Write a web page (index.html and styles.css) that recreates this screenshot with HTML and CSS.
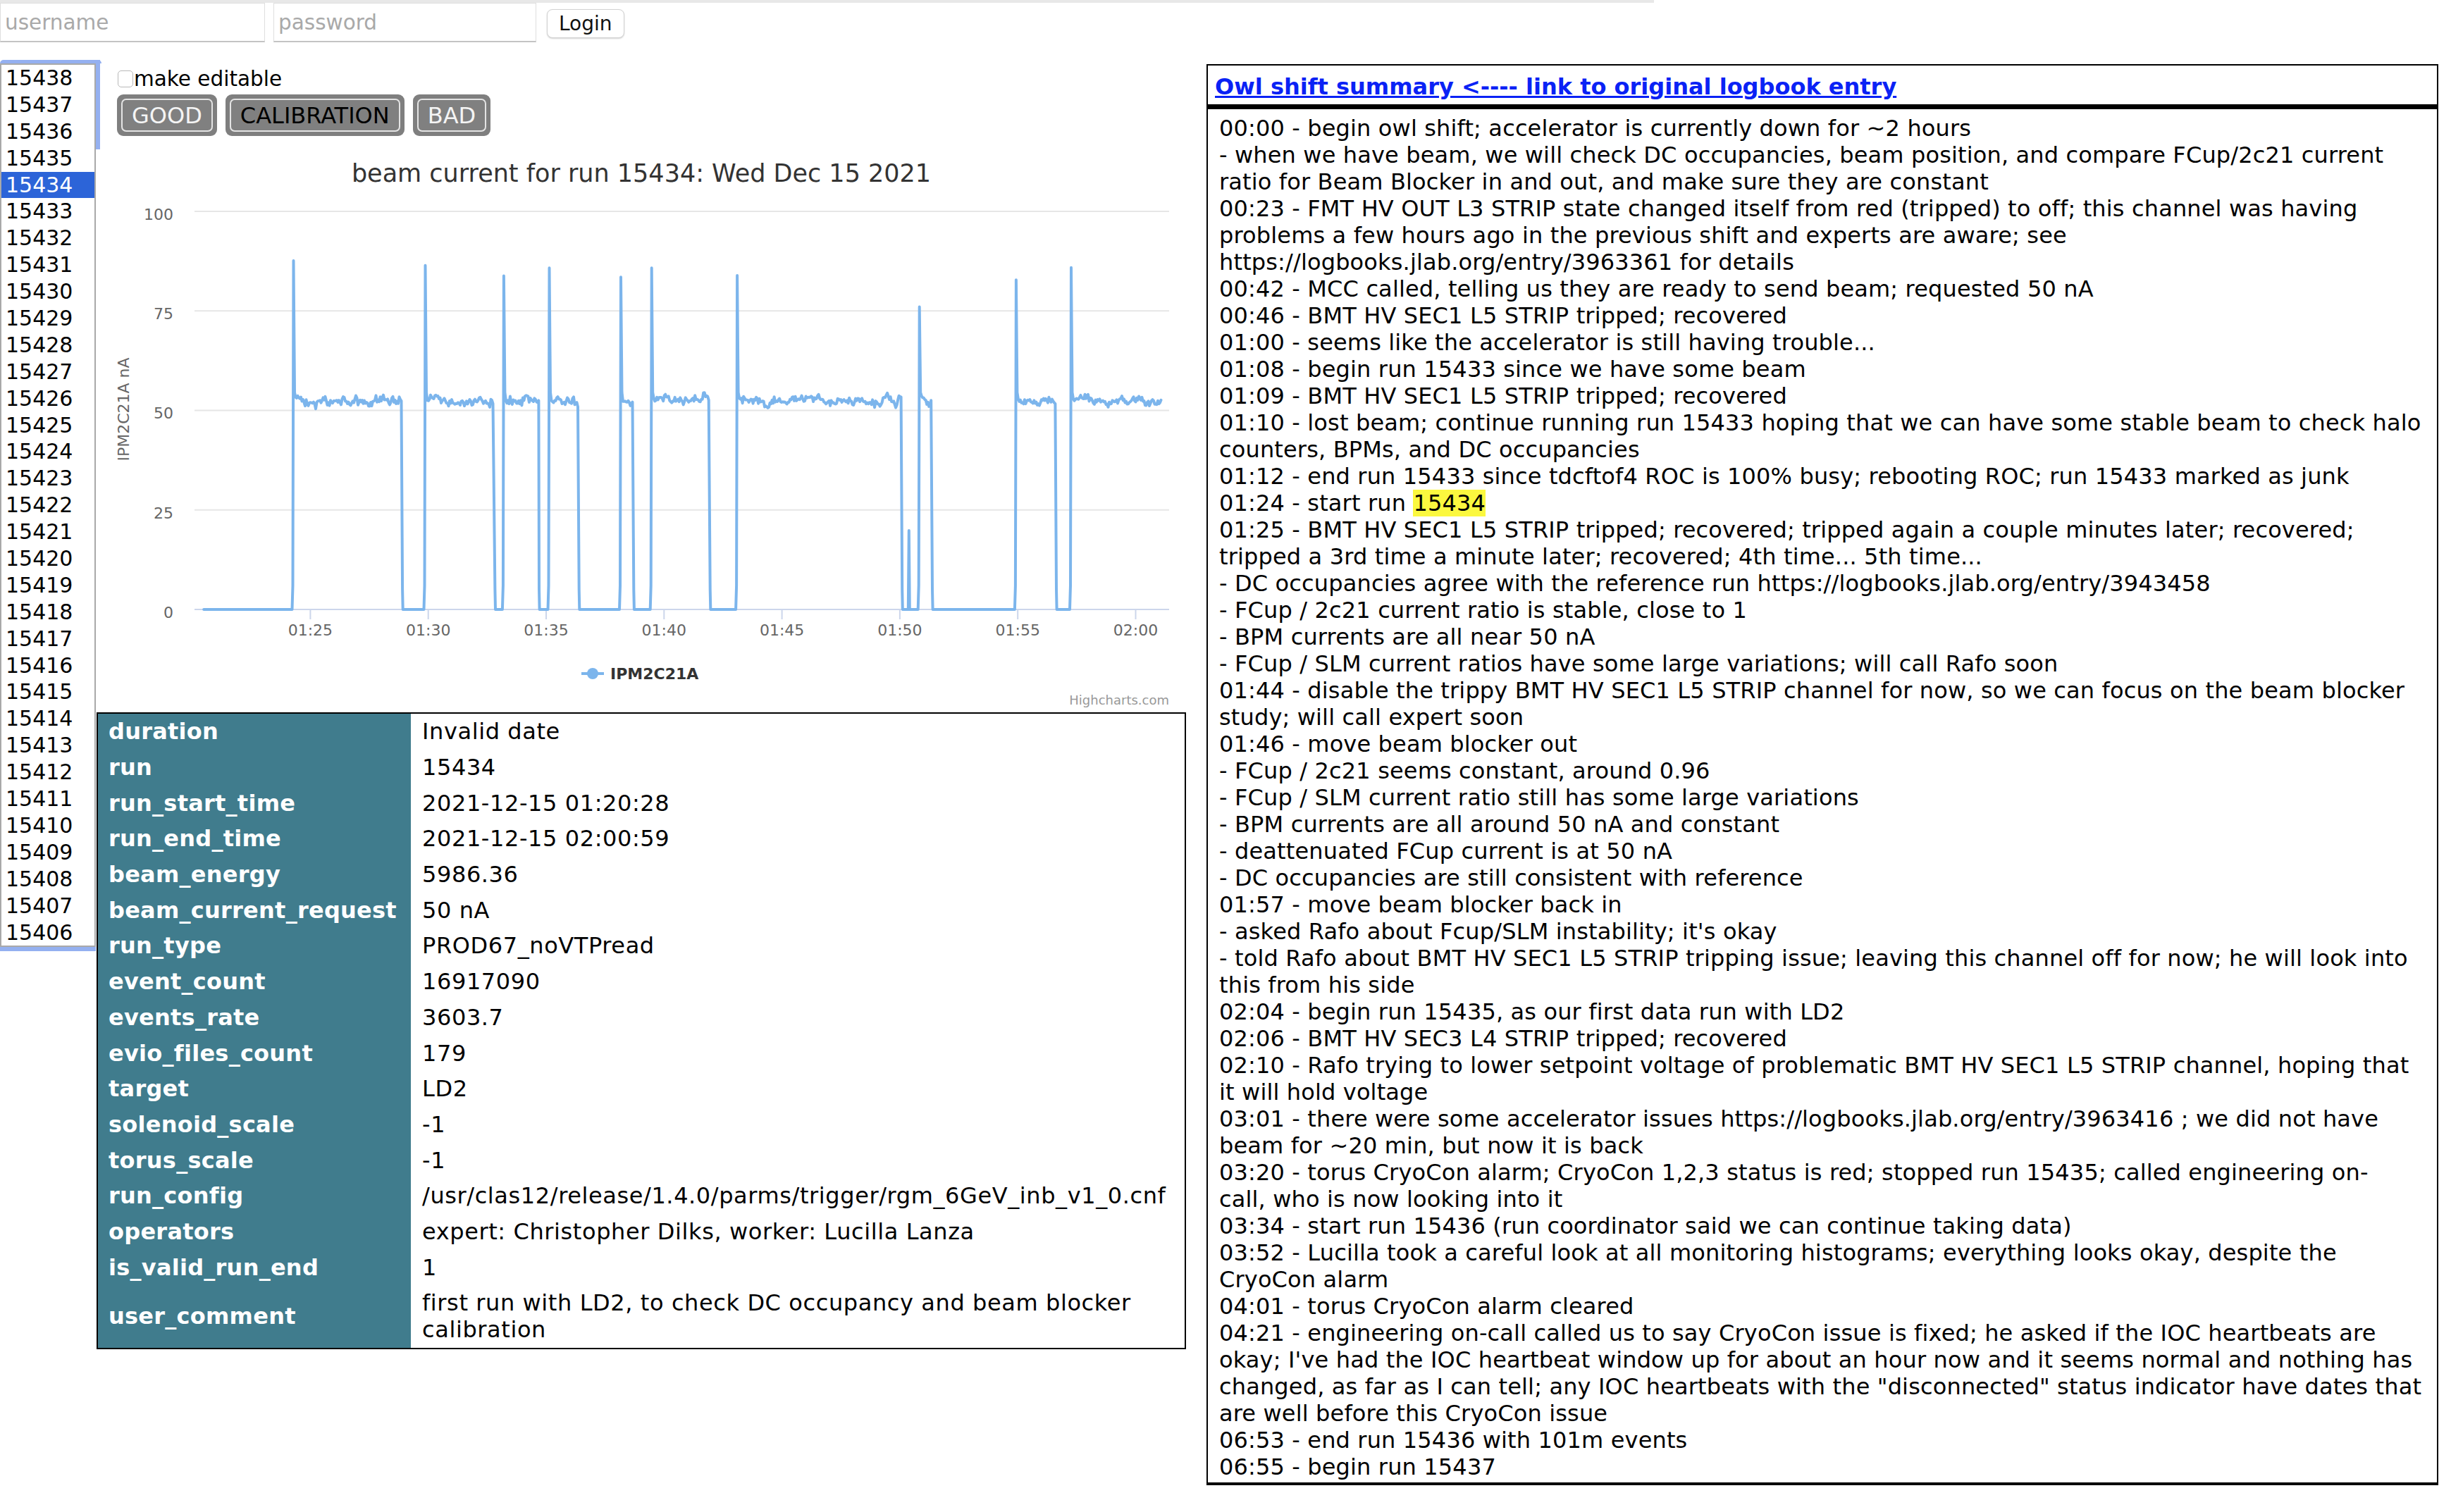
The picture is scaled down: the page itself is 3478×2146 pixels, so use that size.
FILE: index.html
```html
<!DOCTYPE html>
<html>
<head>
<meta charset="utf-8">
<title>Run browser</title>
<link rel="stylesheet" href="styles.css">
</head>
<body>
<div class="topstrip"></div>
<form class="login">
  <input type="text" placeholder="username">
  <input type="password" placeholder="password" class="pw">
  <button type="button">Login</button>
</form>

<div class="main">
  <div class="runlist">
    <div class="run">15438</div>
    <div class="run">15437</div>
    <div class="run">15436</div>
    <div class="run">15435</div>
    <div class="run sel">15434</div>
    <div class="run">15433</div>
    <div class="run">15432</div>
    <div class="run">15431</div>
    <div class="run">15430</div>
    <div class="run">15429</div>
    <div class="run">15428</div>
    <div class="run">15427</div>
    <div class="run">15426</div>
    <div class="run">15425</div>
    <div class="run">15424</div>
    <div class="run">15423</div>
    <div class="run">15422</div>
    <div class="run">15421</div>
    <div class="run">15420</div>
    <div class="run">15419</div>
    <div class="run">15418</div>
    <div class="run">15417</div>
    <div class="run">15416</div>
    <div class="run">15415</div>
    <div class="run">15414</div>
    <div class="run">15413</div>
    <div class="run">15412</div>
    <div class="run">15411</div>
    <div class="run">15410</div>
    <div class="run">15409</div>
    <div class="run">15408</div>
    <div class="run">15407</div>
    <div class="run">15406</div>
  </div>

  <div class="middle">
    <label class="editable"><input type="checkbox" class="cb">make editable</label>
    <div class="grades">
      <div class="grade"><span>GOOD</span></div>
      <div class="grade on"><span>CALIBRATION</span></div>
      <div class="grade"><span>BAD</span></div>
    </div>

    <div class="chart">
      <svg width="1546" height="818" viewBox="0 0 1546 818" xmlns="http://www.w3.org/2000/svg">
        <text class="c-title" x="773" y="65" text-anchor="middle">beam current for run 15434: Wed Dec 15 2021</text>
        <g class="grid">
          <line x1="139" y1="107" x2="1522" y2="107"/>
          <line x1="139" y1="248.25" x2="1522" y2="248.25"/>
          <line x1="139" y1="389.5" x2="1522" y2="389.5"/>
          <line x1="139" y1="530.75" x2="1522" y2="530.75"/>
        </g>
        <line class="axis" x1="139" y1="672" x2="1522" y2="672"/>
        <g class="ticks">
          <line x1="303.4" y1="672" x2="303.4" y2="686"/>
          <line x1="470.7" y1="672" x2="470.7" y2="686"/>
          <line x1="638" y1="672" x2="638" y2="686"/>
          <line x1="805.3" y1="672" x2="805.3" y2="686"/>
          <line x1="972.6" y1="672" x2="972.6" y2="686"/>
          <line x1="1139.9" y1="672" x2="1139.9" y2="686"/>
          <line x1="1307.2" y1="672" x2="1307.2" y2="686"/>
          <line x1="1474.5" y1="672" x2="1474.5" y2="686"/>
        </g>
        <g class="ylab" text-anchor="end">
          <text x="109" y="119">100</text>
          <text x="109" y="260">75</text>
          <text x="109" y="401">50</text>
          <text x="109" y="543">25</text>
          <text x="109" y="684">0</text>
        </g>
        <g class="xlab" text-anchor="middle">
          <text x="303.4" y="709">01:25</text>
          <text x="470.7" y="709">01:30</text>
          <text x="638" y="709">01:35</text>
          <text x="805.3" y="709">01:40</text>
          <text x="972.6" y="709">01:45</text>
          <text x="1139.9" y="709">01:50</text>
          <text x="1307.2" y="709">01:55</text>
          <text x="1474.5" y="709">02:00</text>
        </g>
        <text class="ytitle" transform="translate(46,388) rotate(-90)" text-anchor="middle">IPM2C21A nA</text>
        <path id="series" class="series" d="M152,672 L1511,672"/>
        <g class="legend">
          <line x1="688" y1="763" x2="720" y2="763"/>
          <circle cx="704" cy="763" r="8"/>
          <text x="729" y="771">IPM2C21A</text>
        </g>
        <text class="credits" x="1522" y="807" text-anchor="end">Highcharts.com</text>
      </svg>
    </div>

    <table class="runinfo">
      <tr><th>duration</th><td>Invalid date</td></tr>
      <tr><th>run</th><td>15434</td></tr>
      <tr><th>run_start_time</th><td>2021-12-15 01:20:28</td></tr>
      <tr><th>run_end_time</th><td>2021-12-15 02:00:59</td></tr>
      <tr><th>beam_energy</th><td>5986.36</td></tr>
      <tr><th>beam_current_request</th><td>50 nA</td></tr>
      <tr><th>run_type</th><td>PROD67_noVTPread</td></tr>
      <tr><th>event_count</th><td>16917090</td></tr>
      <tr><th>events_rate</th><td>3603.7</td></tr>
      <tr><th>evio_files_count</th><td>179</td></tr>
      <tr><th>target</th><td>LD2</td></tr>
      <tr><th>solenoid_scale</th><td>-1</td></tr>
      <tr><th>torus_scale</th><td>-1</td></tr>
      <tr><th>run_config</th><td class="nowrap">/usr/clas12/release/1.4.0/parms/trigger/rgm_6GeV_inb_v1_0.cnf</td></tr>
      <tr><th>operators</th><td>expert: Christopher Dilks, worker: Lucilla Lanza</td></tr>
      <tr><th>is_valid_run_end</th><td>1</td></tr>
      <tr><th>user_comment</th><td>first run with LD2, to check DC occupancy and beam blocker<br>calibration</td></tr>
    </table>
  </div>

  <div class="logpanel">
    <div class="loghead"><a href="#">Owl shift summary &lt;---- link to original logbook entry</a></div>
    <div class="logbody">
      <div>00:00 - begin owl shift; accelerator is currently down for ~2 hours</div>
      <div>- when we have beam, we will check DC occupancies, beam position, and compare FCup/2c21 current<br>ratio for Beam Blocker in and out, and make sure they are constant</div>
      <div>00:23 - FMT HV OUT L3 STRIP state changed itself from red (tripped) to off; this channel was having<br>problems a few hours ago in the previous shift and experts are aware; see<br>https://logbooks.jlab.org/entry/3963361 for details</div>
      <div>00:42 - MCC called, telling us they are ready to send beam; requested 50 nA</div>
      <div>00:46 - BMT HV SEC1 L5 STRIP tripped; recovered</div>
      <div>01:00 - seems like the accelerator is still having trouble...</div>
      <div>01:08 - begin run 15433 since we have some beam</div>
      <div>01:09 - BMT HV SEC1 L5 STRIP tripped; recovered</div>
      <div>01:10 - lost beam; continue running run 15433 hoping that we can have some stable beam to check halo<br>counters, BPMs, and DC occupancies</div>
      <div>01:12 - end run 15433 since tdcftof4 ROC is 100% busy; rebooting ROC; run 15433 marked as junk</div>
      <div>01:24 - start run <mark>15434</mark></div>
      <div>01:25 - BMT HV SEC1 L5 STRIP tripped; recovered; tripped again a couple minutes later; recovered;<br>tripped a 3rd time a minute later; recovered; 4th time... 5th time...</div>
      <div>- DC occupancies agree with the reference run https://logbooks.jlab.org/entry/3943458</div>
      <div>- FCup / 2c21 current ratio is stable, close to 1</div>
      <div>- BPM currents are all near 50 nA</div>
      <div>- FCup / SLM current ratios have some large variations; will call Rafo soon</div>
      <div>01:44 - disable the trippy BMT HV SEC1 L5 STRIP channel for now, so we can focus on the beam blocker<br>study; will call expert soon</div>
      <div>01:46 - move beam blocker out</div>
      <div>- FCup / 2c21 seems constant, around 0.96</div>
      <div>- FCup / SLM current ratio still has some large variations</div>
      <div>- BPM currents are all around 50 nA and constant</div>
      <div>- deattenuated FCup current is at 50 nA</div>
      <div>- DC occupancies are still consistent with reference</div>
      <div>01:57 - move beam blocker back in</div>
      <div>- asked Rafo about Fcup/SLM instability; it's okay</div>
      <div>- told Rafo about BMT HV SEC1 L5 STRIP tripping issue; leaving this channel off for now; he will look into<br>this from his side</div>
      <div>02:04 - begin run 15435, as our first data run with LD2</div>
      <div>02:06 - BMT HV SEC3 L4 STRIP tripped; recovered</div>
      <div>02:10 - Rafo trying to lower setpoint voltage of problematic BMT HV SEC1 L5 STRIP channel, hoping that<br>it will hold voltage</div>
      <div>03:01 - there were some accelerator issues https://logbooks.jlab.org/entry/3963416 ; we did not have<br>beam for ~20 min, but now it is back</div>
      <div>03:20 - torus CryoCon alarm; CryoCon 1,2,3 status is red; stopped run 15435; called engineering on-<br>call, who is now looking into it</div>
      <div>03:34 - start run 15436 (run coordinator said we can continue taking data)</div>
      <div>03:52 - Lucilla took a careful look at all monitoring histograms; everything looks okay, despite the<br>CryoCon alarm</div>
      <div>04:01 - torus CryoCon alarm cleared</div>
      <div>04:21 - engineering on-call called us to say CryoCon issue is fixed; he asked if the IOC heartbeats are<br>okay; I've had the IOC heartbeat window up for about an hour now and it seems normal and nothing has<br>changed, as far as I can tell; any IOC heartbeats with the "disconnected" status indicator have dates that<br>are well before this CryoCon issue</div>
      <div>06:53 - end run 15436 with 101m events</div>
      <div>06:55 - begin run 15437</div>
    </div>
  </div>
</div>
<script src="script.js"></script>
</body>
</html>
```

FILE: styles.css
```css
html, body {
  margin: 0;
  padding: 0;
  background: #fff;
}
body {
  font-family: "DejaVu Sans", Verdana, sans-serif;
  font-size: 32px;
  line-height: 38px;
  color: #000;
  width: 3478px;
}

.topstrip {
  width: 2347px;
  height: 4px;
  background: #e8e8e8;
}

.login {
  display: flex;
  align-items: center;
  height: 56px;
  margin: 0;
}
.login input {
  box-sizing: border-box;
  width: 376px;
  height: 56px;
  margin: 0;
  padding: 0 6px;
  border: 1px solid #dedede;
  border-bottom: 2px solid #c4c4c4;
  font-family: "DejaVu Sans", Verdana, sans-serif;
  font-size: 29.5px;
  color: #000;
  background: #fff;
  outline: none;
}
.login input.pw {
  margin-left: 12px;
  width: 373px;
}
.login input::placeholder {
  color: #a9a9a9;
}
.login button {
  margin-left: 15px;
  margin-top: 3px;
  height: 41px;
  padding: 0 16px;
  font-family: "DejaVu Sans", Verdana, sans-serif;
  font-size: 28px;
  color: #111;
  background: #fff;
  border: 1px solid #d2d2d2;
  border-radius: 8px;
  box-shadow: 0 1px 2px rgba(0, 0, 0, 0.18);
}

.main {
  display: flex;
  align-items: flex-start;
  margin-top: 25px;
}

/* run list box */
.runlist {
  position: relative;
  margin-top: 5px;
  width: 132px;
  border: 2px solid #a9a9a9;
  box-shadow: 0 6px 0 0 #94b0f0;
}
.runlist::before {
  content: "";
  position: absolute;
  left: -2px;
  top: -7px;
  width: 144px;
  height: 5px;
  background: #94b0f0;
  border-radius: 5px 5px 0 0;
}
.runlist::after {
  content: "";
  position: absolute;
  right: -8px;
  top: -7px;
  width: 6px;
  height: 127px;
  background: #94b0f0;
}
.run {
  height: 37.9px;
  line-height: 37.9px;
  padding-left: 6px;
  font-size: 30px;
}
.run.sel {
  background: #2c64d8;
  color: #fff;
}

/* middle column */
.middle {
  margin-left: 1px;
  width: 1546px;
}
.editable {
  display: flex;
  align-items: center;
  height: 38px;
  padding: 8px 0 0 30px;
  font-size: 29.5px;
}
.cb {
  appearance: none;
  -webkit-appearance: none;
  box-sizing: border-box;
  width: 22px;
  height: 24px;
  margin: 0 1px 0 0;
  border: 1px solid #b8b8b8;
  border-radius: 5px;
  background: #fff;
}
.grades {
  display: flex;
  gap: 12px;
  margin: 3px 0 0 29px;
}
.grade {
  padding: 6px;
  background: #7f7f7f;
  border-radius: 9px;
}
.grade span {
  display: block;
  padding: 2.5px 13px;
  line-height: 38px;
  border: 2px solid #e4e4e4;
  border-radius: 7px;
  background: #808080;
  color: #f4f4f4;
}
.grade.on span {
  color: #000;
}

.chart svg {
  display: block;
  font-family: "DejaVu Sans", Verdana, sans-serif;
}
.c-title {
  font-size: 35px;
  fill: #333;
}
.grid line {
  stroke: #e6e6e6;
  stroke-width: 2;
}
.axis, .ticks line {
  stroke: #ccd6eb;
  stroke-width: 2;
}
.ylab text, .xlab text {
  font-size: 22px;
  fill: #666;
}
.ytitle {
  font-size: 22px;
  fill: #666;
}
.series {
  fill: none;
  stroke: #7cb5ec;
  stroke-width: 4;
  stroke-linejoin: round;
  stroke-linecap: round;
}
.legend line {
  stroke: #7cb5ec;
  stroke-width: 4;
}
.legend circle {
  fill: #7cb5ec;
}
.legend text {
  font-size: 22px;
  font-weight: bold;
  fill: #333;
}
.credits {
  font-size: 18px;
  fill: #999;
}

/* run info table */
.runinfo {
  width: 1546px;
  border-collapse: separate;
  border-spacing: 0;
  border: 2px solid #000;
  table-layout: fixed;
}
.runinfo th {
  width: 415px;
  padding: 6.35px 14px 6.35px 15px;
  background: #407c8d;
  color: #fff;
  font-weight: bold;
  text-align: left;
  vertical-align: middle;
  line-height: 38px;
  letter-spacing: 0.25px;
}
.runinfo td {
  padding: 6.35px 8px 6.35px 16px;
  line-height: 38px;
  vertical-align: middle;
  letter-spacing: 0.6px;
}
.runinfo td.nowrap {
  white-space: nowrap;
}

/* right log panel */
.logpanel {
  margin: 6px 0 0 29px;
  width: 1744px;
  border: 2px solid #000;
  border-bottom-width: 4px;
}
.loghead {
  padding: 11px 10px 6px 10px;
  border-bottom: 7px solid #000;
}
.loghead a {
  color: #0a22f5;
  font-weight: bold;
  text-decoration: underline;
}
.logbody {
  padding: 8px 10px 3px 16px;
  letter-spacing: 0.15px;
}
.logbody div {
  white-space: nowrap;
}
.logbody mark {
  background: #fbf83f;
  color: #000;
}
```

FILE: script.js
```js
(function () {
  function Y(v) { return 672 - v * 5.65; }
  var seed = 987654;
  function rnd() { seed = (seed * 16807) % 2147483647; return seed / 2147483647; }
  // [rise x, spike value, plateau end x, drop x]
  var segs = [
    [279.5, 87.6, 432.7, 434.7],
    [466.5, 86.4, 563, 566],
    [577.9, 83.8, 627.6, 628.6],
    [642.5, 85.8, 683.3, 685.3],
    [744, 83.5, 760.9, 762.9],
    [787.7, 85.8, 869.3, 871.3],
    [909.1, 83.9, 1141.8, 1143.8],
    [1167.7, 76.0, 1184.6, 1186.6],
    [1304.9, 82.8, 1360.6, 1362.6],
    [1383, 85.9, 1510.8, 0]
  ];
  var d = 'M152.2,' + Y(0).toFixed(1);
  segs.forEach(function (s, i) {
    if (i === 7) {
      d += ' L1151.8,' + Y(0).toFixed(1) + ' L1152.8,' + Y(19.8).toFixed(1) + ' L1153.8,' + Y(0).toFixed(1);
    }
    d += ' L' + (s[0] - 2).toFixed(1) + ',' + Y(0).toFixed(1);
    d += ' L' + (s[0] - 1).toFixed(1) + ',' + Y(6).toFixed(1);
    d += ' L' + s[0].toFixed(1) + ',' + Y(s[1]).toFixed(1);
    d += ' L' + (s[0] + 1.5).toFixed(1) + ',' + Y(54.5).toFixed(1);
    var v = 52.6;
    for (var x = s[0] + 3; x <= s[2]; x += 1.5) {
      v += (rnd() - 0.5) * 1.5;
      v += (52.4 - v) * 0.2;
      var vv = v + (rnd() - 0.5) * 1.5;
      d += ' L' + x.toFixed(1) + ',' + Y(vv).toFixed(1);
    }
    if (s[3]) {
      d += ' L' + (s[3] - 0.6).toFixed(1) + ',' + Y(5).toFixed(1) + ' L' + s[3].toFixed(1) + ',' + Y(0).toFixed(1);
    }
  });
  document.getElementById('series').setAttribute('d', d);
})();
```
